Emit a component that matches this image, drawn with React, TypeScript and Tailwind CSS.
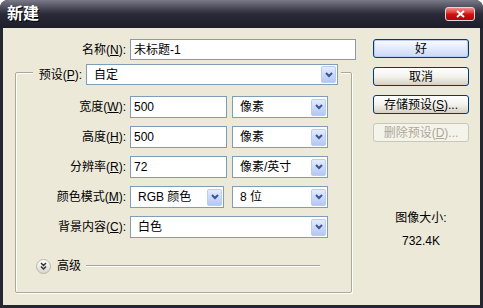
import React from "react";

const Arrow = () => (
  <div className="w-[15px] h-[17px] mr-px rounded-[2px] border border-[#BACBF4] bg-linear-to-b from-[#E4ECFD] to-[#B4C7F4] flex items-center justify-center">
    <svg width="8" height="6" viewBox="0 0 8 6">
      <path d="M1 1 L4 4 L7 1" fill="none" stroke="#3A5499" strokeWidth="2" />
    </svg>
  </div>
);

const Select = ({ value, w }: { value: string; w: string }) => (
  <div className={`${w} h-[22px] border border-[#7F9DB9] bg-white flex items-center`}>
    <span className="flex-1 pl-[7px] leading-none">{value}</span>
    <Arrow />
  </div>
);

const Input = ({ value, w }: { value: string; w: string }) => (
  <div className={`${w} h-[22px] border border-[#7F9DB9] bg-white flex items-center pl-[3px] leading-none`}>
    {value}
  </div>
);

const Label = ({ text, k, w }: { text: string; k: string; w: string }) => (
  <span className={`${w} text-right leading-none`}>
    {text}(<u>{k}</u>):
  </span>
);

const Btn = ({ children, kind }: { children: React.ReactNode; kind?: "default" | "disabled" }) => {
  const base = "w-[96px] h-[19px] rounded-[3px] border flex items-center justify-center leading-none text-[12px]";
  if (kind === "default")
    return (
      <div className={`${base} border-[#003C74] bg-linear-to-b from-[#FBFCFF] to-[#CAD8F6] shadow-[inset_0_0_0_1px_#B9CCF5]`}>
        {children}
      </div>
    );
  if (kind === "disabled")
    return (
      <div className={`${base} border-[#C9C7BA] bg-[#F5F4EA] text-[#ACA899]`}>{children}</div>
    );
  return (
    <div className={`${base} border-[#003C74] bg-linear-to-b from-[#FFFFFF] via-[#F3F2EC] to-[#D6D0C4]`}>
      {children}
    </div>
  );
};

export default function App() {
  const rows: { label: string; k: string; field: React.ReactNode; unit?: React.ReactNode }[] = [
    { label: "宽度", k: "W", field: <Input value="500" w="w-[97px]" />, unit: <Select value="像素" w="w-[96px]" /> },
    { label: "高度", k: "H", field: <Input value="500" w="w-[97px]" />, unit: <Select value="像素" w="w-[96px]" /> },
    { label: "分辨率", k: "R", field: <Input value="72" w="w-[97px]" />, unit: <Select value="像素/英寸" w="w-[96px]" /> },
    { label: "颜色模式", k: "M", field: <Select value="RGB 颜色" w="w-[94px]" />, unit: <Select value="8 位" w="w-[96px]" /> },
    { label: "背景内容", k: "C", field: <Select value="白色" w="w-[198px]" /> },
  ];

  return (
    <div className="w-[483px] h-[308px] bg-white font-['Liberation_Sans','Noto_Sans_CJK_SC',sans-serif] text-[12px] text-black">
      <div className="w-full h-full rounded-t-[8px] bg-[#262632] flex flex-col overflow-hidden">
        <div className="h-[28px] flex items-start justify-between pl-[7px] pr-[8px] pt-[6px] bg-linear-to-b from-[#7A7A88] via-[#2A2A38] to-[#1E1E2A]">
          <span className="text-white font-bold text-[16px] leading-[16px] [text-shadow:1px_1px_0_#000]">新建</span>
          <div className="mt-px w-[30px] h-[14px] rounded-[3px] border border-[#D8D8E0] bg-linear-to-b from-[#F08A8A] via-[#D41010] to-[#B00808] flex items-center justify-center">
            <svg width="9" height="8" viewBox="0 0 9 8">
              <path d="M1 1 L8 7 M8 1 L1 7" stroke="#fff" strokeWidth="2" />
            </svg>
          </div>
        </div>
        <div className="flex-1 mx-[3px] mb-[3px] bg-[#ECE9D8] flex">
          <div className="w-[356px] flex flex-col">
            <div className="flex items-center gap-[4px] mt-[11px]">
              <Label text="名称" k="N" w="w-[123px]" />
              <div className="w-[226px] h-[21px] border border-[#7F9DB9] bg-white flex items-center pl-[3px] leading-none">
                未标题-1
              </div>
            </div>
            <div className="ml-[12px] mt-[12px] w-[337px] h-[221px] border border-[#ACA899] rounded-[2px] shadow-[inset_1px_1px_0_#fff,1px_1px_0_#fff] flex flex-col">
              <div className="-mt-[9px] ml-[17px] px-[3px] self-start bg-[#ECE9D8] flex items-center gap-[4px]">
                <Label text="预设" k="P" w="w-[46px]" />
                <div className="w-[252px] h-[21px] border border-[#7F9DB9] bg-white flex items-center">
                  <span className="flex-1 pl-[7px] leading-none">自定</span>
                  <Arrow />
                </div>
              </div>
              <div className="mt-[11px] flex flex-col gap-[8px]">
                {rows.map((r) => (
                  <div key={r.k} className="flex items-center">
                    <Label text={r.label} k={r.k} w="w-[110px]" />
                    <div className="ml-[4px]">{r.field}</div>
                    {r.unit && <div className={r.k === "M" ? "ml-[8px]" : "ml-[5px]"}>{r.unit}</div>}
                  </div>
                ))}
              </div>
              <div className="mt-[20px] ml-[20px] flex items-center h-[16px]">
                <div className="w-[15px] h-[15px] rounded-full border border-[#B8B6AC] bg-linear-to-b from-white to-[#D9D6CB] flex items-center justify-center">
                  <svg width="7" height="8" viewBox="0 0 7 8">
                    <path d="M1 1 L3.5 3.5 L6 1 M1 4.5 L3.5 7 L6 4.5" fill="none" stroke="#333" strokeWidth="1.5" />
                  </svg>
                </div>
                <span className="ml-[6px] leading-none">高级</span>
                <div className="ml-[5px] w-[234px] h-[2px] border-t border-[#ACA899] border-b border-b-white" />
              </div>
            </div>
          </div>
          <div className="ml-[14px] w-[96px] flex flex-col items-center pt-[11px]">
            <div className="flex flex-col gap-[9px]">
              <Btn kind="default">好</Btn>
              <Btn>取消</Btn>
              <Btn>
                存储预设(<u>S</u>)...
              </Btn>
              <Btn kind="disabled">
                删除预设(<u>D</u>)...
              </Btn>
            </div>
            <div className="mt-[69px] leading-[14px]">图像大小:</div>
            <div className="mt-[9px] leading-[14px]">732.4K</div>
          </div>
        </div>
      </div>
    </div>
  );
}
